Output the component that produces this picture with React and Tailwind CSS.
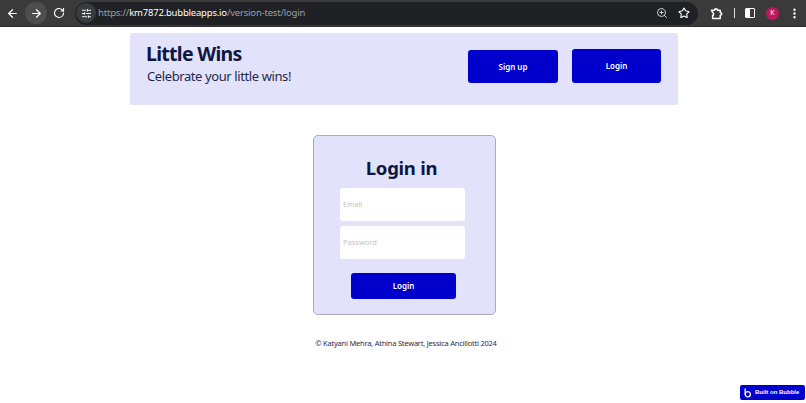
import React from "react";
import { ArrowLeft, ArrowRight, RotateCw, SlidersHorizontal, ZoomIn, Star, MoreVertical } from "lucide-react";

function Toolbar() {
  return (
    <div className="h-[27px] bg-[#3a3a3a] flex items-center text-white shrink-0 border-b border-[#2c2c2c]">
      <div className="w-[25px] flex justify-center"><ArrowLeft size={13} strokeWidth={2.2} /></div>
      <div className="w-[22px] h-[22px] rounded-full bg-[#4d4d4d] flex items-center justify-center"><ArrowRight size={13} strokeWidth={2.2} /></div>
      <div className="w-[24px] flex justify-center"><RotateCw size={12} strokeWidth={2.4} /></div>
      <div className="ml-[4px] w-[623px] h-[23px] bg-[#202124] rounded-full flex items-center">
        <div className="w-[20px] h-[20px] ml-[1px] rounded-full bg-[#3a3b3d] flex items-center justify-center"><SlidersHorizontal size={11} /></div>
        <div className="ml-[2px] text-[9.5px] tracking-[-0.2px] text-[#9aa0a6] whitespace-nowrap">
          https://<span className="text-white">km7872.bubbleapps.io</span>/version-test/login
        </div>
        <div className="ml-auto flex items-center gap-[9px] pr-[8px]">
          <ZoomIn size={12} className="text-[#d0d0d0] -translate-x-[1px]" />
          <Star size={12} strokeWidth={2.2} />
        </div>
      </div>
      <div className="ml-[12px] flex items-center">
        <svg width="13" height="13" viewBox="0 0 13 13" fill="none" stroke="white" strokeWidth="1.5" strokeLinejoin="round">
          <path d="M1.5 3.2H4.6C4.6 1.2 7.4 1.2 7.4 3.2H10.2V5.4C12.2 5.4 12.2 8.2 10.2 8.2V11.5H2.6V8.6C4 8.4 4 5.6 2.6 5.4Z" />
        </svg>
        <div className="ml-[11px] w-px h-[10px] bg-[#e0e0e0]" />
        <div className="ml-[10px] w-[10px] h-[10px] rounded-[1px] border border-white flex justify-start"><div className="w-1/2 bg-white" /></div>
        <div className="ml-[11px] w-[13px] h-[13px] rounded-full bg-[#c2185b] text-[7px] flex items-center justify-center">K</div>
        <MoreVertical size={13} strokeWidth={2.4} className="ml-[9px]" />
      </div>
    </div>
  );
}

function Btn({ className, children }) {
  return (
    <button className={`bg-[#0000cd] text-white text-[8px] font-semibold rounded-[3px] flex items-center justify-center ${className}`}>
      {children}
    </button>
  );
}

export default function App() {
  return (
    <div className="relative w-[806px] h-[403px] overflow-hidden bg-white flex flex-col" style={{ fontFamily: '"Noto Sans", sans-serif' }}>
      <Toolbar />
      <div className="pl-[2px] flex flex-col items-center">
        <header className="mt-[6px] w-[548px] h-[72px] bg-[#e2e3fa] rounded-[2px] flex text-[#0f1642]">
          <div className="pl-[16px] pt-[7px] flex-1">
            <h1 className="text-[19.5px] tracking-[-0.7px] leading-[28px] font-bold">Little Wins</h1>
            <p className="ml-[1px] -mt-[2px] text-[13px] tracking-[-0.4px] leading-[20px] text-[#24284e]">Celebrate your little wins!</p>
          </div>
          <div className="flex pr-[17px] gap-[14px] pt-[16px]">
            <Btn className="w-[90px] h-[33px] mt-[1px]">Sign up</Btn>
            <Btn className="w-[89px] h-[34px]">Login</Btn>
          </div>
        </header>

        <section className="mt-[30px] w-[183px] h-[180px] bg-[#e2e3fa] border border-[#a9a9c0] rounded-[5px] flex flex-col items-center">
          <h2 className="mt-[18px] mr-[5px] text-[18.5px] tracking-[-0.25px] leading-[27px] font-bold text-[#0f1642]">Login in</h2>
          <div className="mt-[7px] mr-[3px] w-[125px] h-[33px] bg-white rounded-[3px] flex items-center pl-[3px] text-[7.5px] text-[#c4c4c4]">Email</div>
          <div className="mt-[5px] mr-[3px] w-[125px] h-[33px] bg-white rounded-[3px] flex items-center pl-[3px] text-[7.5px] text-[#c4c4c4]">Password</div>
          <Btn className="mt-[14px] mr-[1px] w-[105px] h-[26px]">Login</Btn>
        </section>

        <footer className="mt-[22px] ml-[4px] text-[7.5px] tracking-[-0.22px] leading-[12px] text-[#2a2d4a]">© Katyani Mehra, Athina Stewart, Jessica Ancillotti 2024</footer>
      </div>

      <div className="absolute left-[740px] top-[385px] w-[65px] h-[15px] bg-[#0000cd] rounded-[2px] flex items-center text-white">
        <svg className="ml-[4px]" width="8" height="10" viewBox="0 0 8 10" fill="none" stroke="white" strokeWidth="1.3">
          <path d="M1.2 0.5V6.5" />
          <circle cx="3.8" cy="6.3" r="2.6" />
        </svg>
        <span className="ml-[3px] text-[6px] font-bold whitespace-nowrap" style={{ fontFamily: '"Liberation Sans", sans-serif' }}>Built on Bubble</span>
      </div>
    </div>
  );
}
